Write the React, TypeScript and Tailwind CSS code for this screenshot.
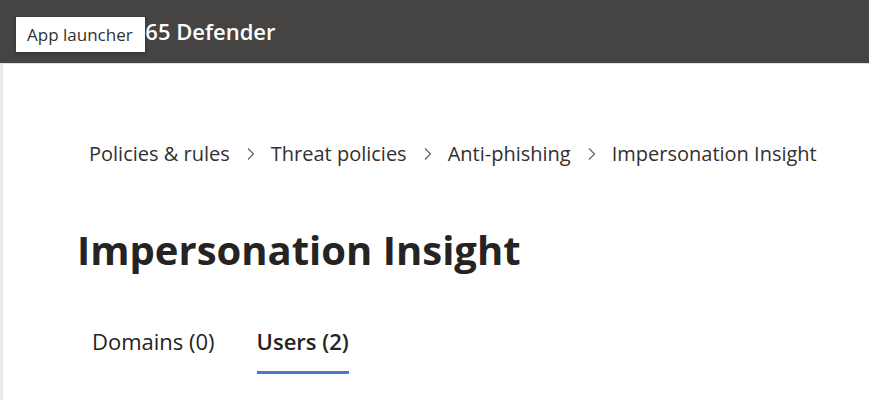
import React from "react";

const Chevron = () => (
  <svg width="11" height="14" viewBox="0 0 11 14" className="mx-[15px] shrink-0">
    <path d="M3 1.5 L8.5 7 L3 12.5" fill="none" stroke="#605e5c" strokeWidth="1.1" />
  </svg>
);

export default function App() {
  const crumbs = ["Policies & rules", "Threat policies", "Anti-phishing", "Impersonation Insight"];
  return (
    <div className="w-[869px] h-[400px] overflow-hidden bg-white relative" style={{ fontFamily: '"Open Sans", "Noto Sans", sans-serif' }}>
      <header className="h-[64px] bg-[#454443] flex items-center border-b border-[#e1dfdd]">
        <div className="w-[48px] h-full flex items-center justify-center">
          <div className="grid grid-cols-3 gap-[3px]">
            {Array.from({ length: 9 }).map((_, i) => (
              <div key={i} className="w-[3px] h-[3px] bg-white" />
            ))}
          </div>
        </div>
        <span className="text-white text-[22px] font-semibold ml-[-22px]">Microsoft 365 Defender</span>
      </header>
      <div className="absolute left-[15px] top-[16px] w-[131px] h-[37px] bg-white border border-[#3b3a39] flex items-center pl-[11px] text-[17px] text-[#323130] shadow-[0_1px_3px_rgba(0,0,0,0.2)]">
        App launcher
      </div>
      <div className="flex h-[336px]">
        <div className="w-[3px] bg-[#ebebeb]" />
        <main className="flex-1 pl-[74px]">
          <nav className="flex items-center pl-[12px] pt-[76px] text-[20px] text-[#323130] leading-[28px]">
            {crumbs.map((c, i) => (
              <React.Fragment key={c}>
                {i > 0 && <Chevron />}
                <span>{c}</span>
              </React.Fragment>
            ))}
          </nav>
          <h1 className="mt-[56px] text-[40px] font-bold text-[#252423] leading-[52px]">Impersonation Insight</h1>
          <div className="mt-[50px] flex gap-[42px] pl-[15px] text-[22px] text-[#252423] leading-[30px]">
            <div className="pb-[15px]">Domains (0)</div>
            <div className="pb-[15px] font-semibold border-b-[3px] border-[#4a78d0]">Users (2)</div>
          </div>
        </main>
      </div>
    </div>
  );
}
